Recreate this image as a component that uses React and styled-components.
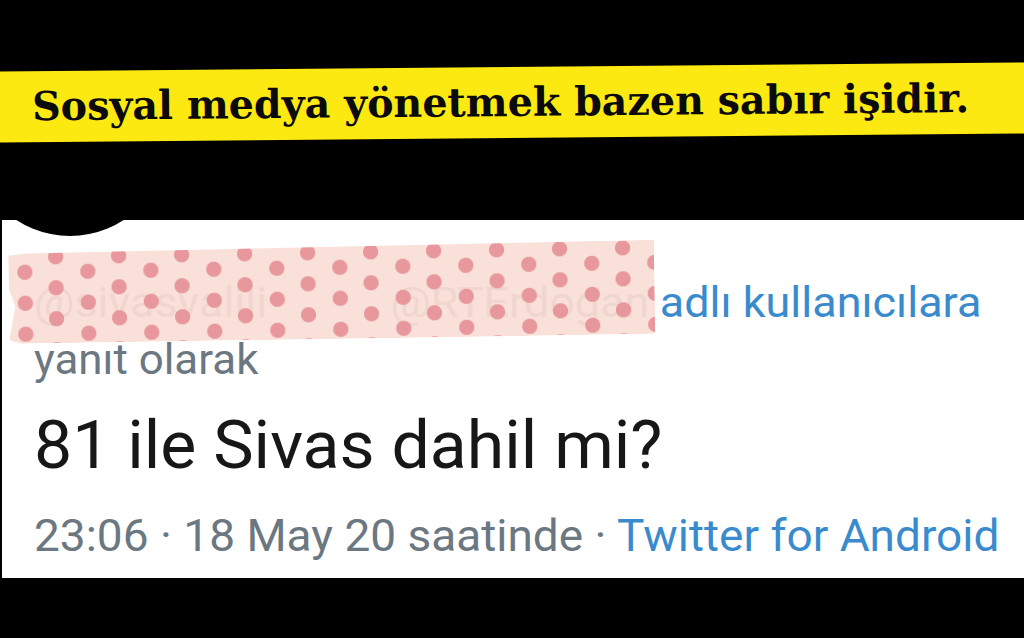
import styled, { createGlobalStyle } from 'styled-components';

const GlobalStyle = createGlobalStyle`
  html, body {
    margin: 0;
    padding: 0;
    background: #000;
  }
`;

const Page = styled.div`
  position: relative;
  width: 1024px;
  height: 638px;
  background: #000;
  overflow: hidden;
  display: flex;
  flex-direction: column;
`;

const Banner = styled.div`
  margin: 67px 0 0 -4px;
  width: 1036px;
  height: 71px;
  background: #fde912;
  transform: rotate(-0.5deg);
  display: flex;
  align-items: center;
  padding: 0 0 2px 36px;
  box-sizing: border-box;
`;

const BannerText = styled.h1`
  margin: 0;
  font-family: "DejaVu Serif", serif;
  font-weight: 700;
  font-size: 40px;
  color: #0b0b0b;
  white-space: nowrap;
  transform: scaleX(0.99);
  transform-origin: left center;
`;

const Card = styled.div`
  position: relative;
  margin: 82px 0 0 2px;
  height: 358px;
  background: #fff;
  padding: 56px 0 0 32px;
  box-sizing: border-box;
  font-family: Roboto, "Noto Sans", sans-serif;
  overflow: hidden;
`;

const Avatar = styled.div`
  position: absolute;
  left: -30px;
  top: -180px;
  width: 196px;
  height: 196px;
  border-radius: 50%;
  background: #000;
`;

const Line = styled.div`
  white-space: nowrap;
  font-size: ${(p) => p.$size}px;
  line-height: ${(p) => p.$lh}px;
  color: ${(p) => p.$color || '#6b7781'};
  transform: scaleX(${(p) => p.$sx || 1.045});
  transform-origin: left center;
  margin-top: ${(p) => p.$mt || 0}px;
`;

const Mention = styled.span`
  color: #b9b9b9;
  margin-right: ${(p) => p.$gap || 10}px;
`;

const Blue = styled.span`
  color: #3a8bcd;
`;

const Tape = styled.div`
  position: absolute;
  left: 6px;
  top: 30px;
  width: 646px;
  height: 94px;
  transform: rotate(-0.9deg);
  transform-origin: left top;
  background-color: rgba(248, 219, 211, 0.86);
  background-image:
    radial-gradient(circle, rgba(230, 146, 152, 0.92) 7.2px, transparent 8px),
    radial-gradient(circle, rgba(230, 146, 152, 0.92) 7.2px, transparent 8px);
  background-size: 63px 31px;
  background-position: 16px -8px, 48px 7px;
  clip-path: polygon(0 6%, 3% 4%, 100% 0, 100% 100%, 2% 100%, 0 96%, 1% 60%, 0 40%);
`;

export default function App() {
  return (
    <>
      <GlobalStyle />
      <Page>
        <Banner>
          <BannerText>Sosyal medya yönetmek bazen sabır işidir.</BannerText>
        </Banner>
        <Card>
          <Avatar />
          <Line $size={43} $lh={52}>
            <Mention $gap={118}>@sivasvalili</Mention>
            <Mention>@RTErdogan</Mention>
            <Blue>adlı kullanıcılara</Blue>
          </Line>
          <Line $size={42} $lh={52} $mt={6}>yanıt olarak</Line>
          <Line $size={66} $lh={80} $mt={20} $sx={1.03} $color="#171717">81 ile Sivas dahil mi?</Line>
          <Line $size={44} $lh={52} $mt={24}>
            23:06 · 18 May 20 saatinde · <Blue>Twitter for Android</Blue>
          </Line>
          <Tape />
        </Card>
      </Page>
    </>
  );
}
